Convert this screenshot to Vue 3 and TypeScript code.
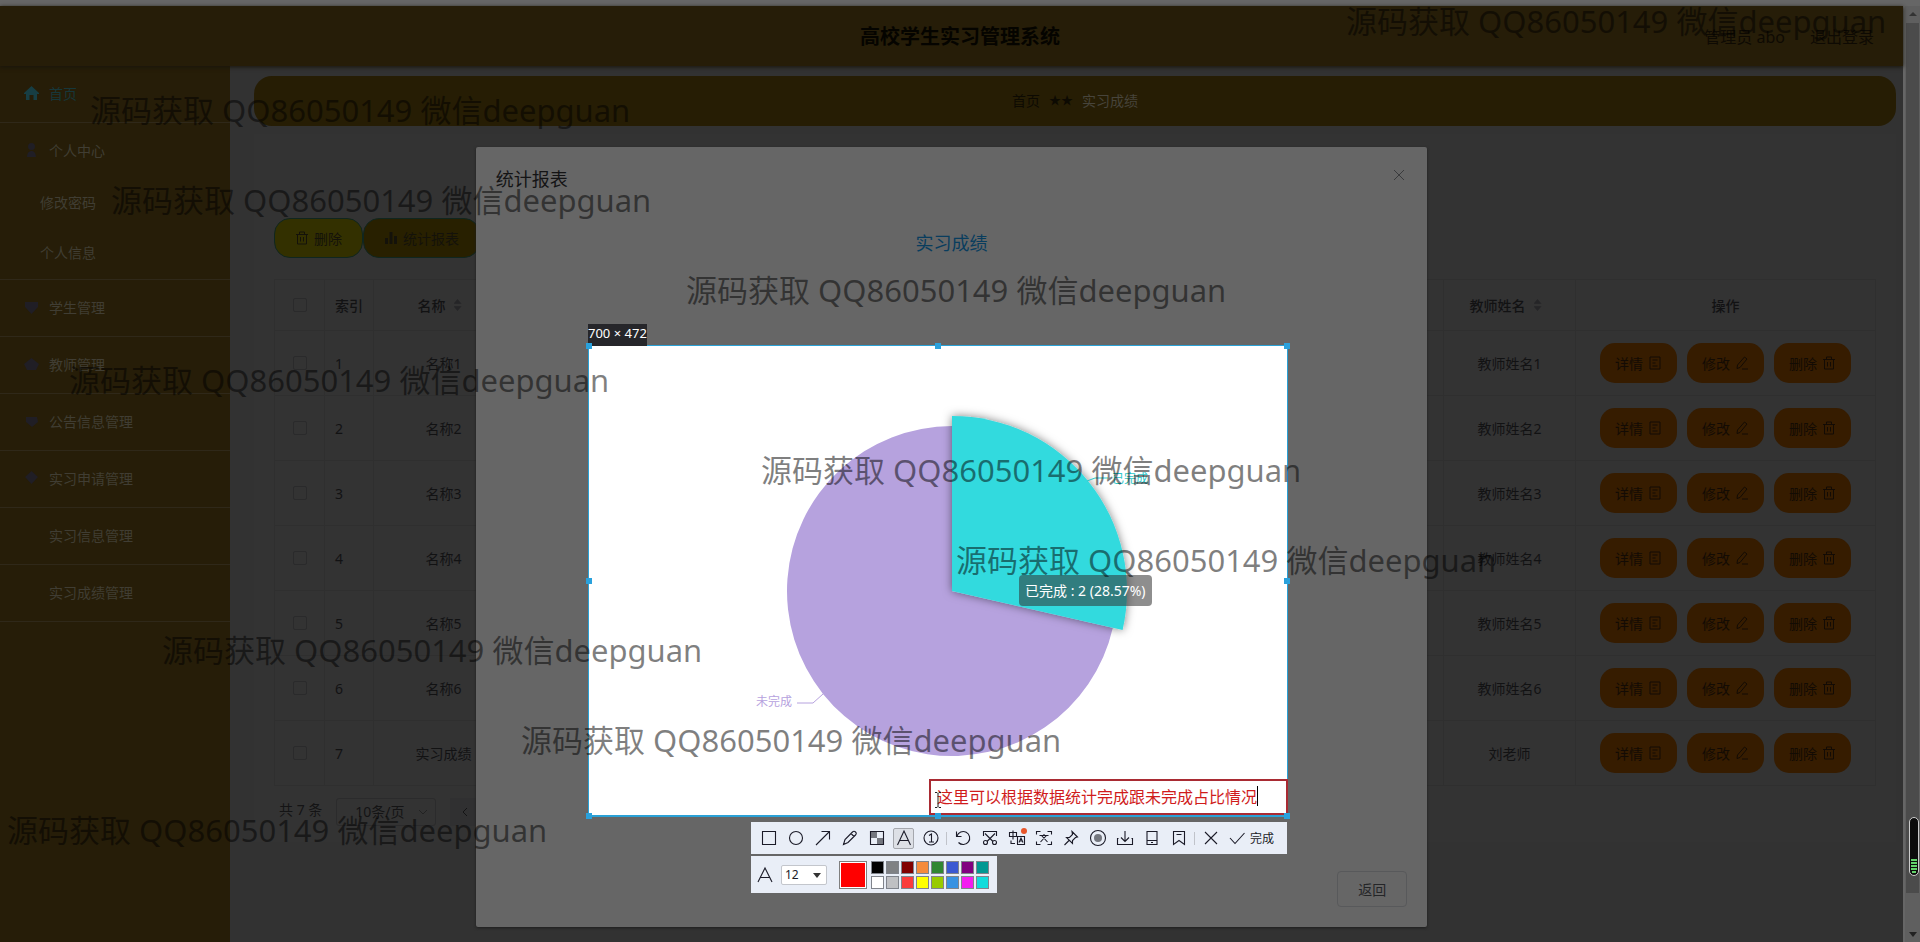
<script setup lang="ts">
interface MenuItem {
  label: string
  icon: string
  active?: boolean
  children?: string[]
}
interface Row {
  id: number
  name: string
  teacher: string
}
interface Mark {
  left: number
  top: number
}

const menu: MenuItem[] = [
  { label: '首页', icon: 'M0 7 7.500 0 15 7v1h-2v6H9.500V9h-4v5H2V8H0z', active: true },
  {
    label: '个人中心',
    icon: 'M7.500 0a3.500 3.500 0 0 1 0 7 3.500 3.500 0 0 1 0-7zM3 14c0-8 9-8 9 0z',
    children: ['修改密码', '个人信息'],
  },
  { label: '学生管理', icon: 'M1 2h13v5l-6.500 7L1 7z' },
  { label: '教师管理', icon: 'M0 7l7.500-6L15 7l-3 6H3z' },
  { label: '公告信息管理', icon: 'M2 3h11l1 5-6 5-6-5z' },
  { label: '实习申请管理', icon: 'M7.500 0 14 6l-6.500 7L1 6z' },
  { label: '实习信息管理', icon: '' },
  { label: '实习成绩管理', icon: '' },
]

const rows: Row[] = [
  { id: 1, name: '名称1', teacher: '教师姓名1' },
  { id: 2, name: '名称2', teacher: '教师姓名2' },
  { id: 3, name: '名称3', teacher: '教师姓名3' },
  { id: 4, name: '名称4', teacher: '教师姓名4' },
  { id: 5, name: '名称5', teacher: '教师姓名5' },
  { id: 6, name: '名称6', teacher: '教师姓名6' },
  { id: 7, name: '实习成绩', teacher: '刘老师' },
]

const iconTrash = 'M1 3.500h12M4.500 3V1h5v2M2.500 3.500v9.500h9V3.500M5.500 6v4.500M8.500 6v4.500'
const actions = [
  { label: '详情', icon: 'M2 1h10v12H2zM4.500 4h5M4.500 7h3M4.500 10h5' },
  { label: '修改', icon: 'M9.500 1 12 3 5 11.500l-3 1 .5-3.500zM7 13h6' },
  { label: '删除', icon: iconTrash },
]

const marks: Mark[] = [
  { left: 1346, top: 1 },
  { left: 90, top: 90 },
  { left: 111, top: 180 },
  { left: 686, top: 270 },
  { left: 69, top: 360 },
  { left: 761, top: 450 },
  { left: 956, top: 540 },
  { left: 162, top: 630 },
  { left: 521, top: 720 },
  { left: 7, top: 810 },
]

const handles = ['tl', 'tc', 'tr', 'ml', 'mr', 'bl', 'bc', 'br']

const swatches = [
  '#000000', '#7f8184', '#800000', '#f58b3c', '#308632', '#3a58d2', '#800080', '#009892',
  '#ffffff', '#bfc0c3', '#fa3c3c', '#ffff00', '#98cb00', '#3892e2', '#f41cf0', '#10dcdc',
]

// Pie geometry inside the 700 x 472 capture
const cx = 364
const cy = 246
const radius = 165
const total = 7
const done = 2
const angle = (done / total) * Math.PI * 2
function slice(from: number, to: number, r: number): string {
  const x1 = cx + r * Math.sin(from)
  const y1 = cy - r * Math.cos(from)
  const x2 = cx + r * Math.sin(to)
  const y2 = cy - r * Math.cos(to)
  const large = to - from > Math.PI ? 1 : 0
  return `M${cx} ${cy}L${x1} ${y1}A${r} ${r} 0 ${large} 1 ${x2} ${y2}Z`
}
const donePath = slice(0, angle, radius + 10)
const restPath = slice(angle, Math.PI * 2, radius)
</script>

<template>
  <div class="screen">
    <div class="browser">
      <div class="page">
        <header class="topbar">
          <h1>高校学生实习管理系统</h1>
          <div class="user">
            <span>管理员 abo</span>
            <a href="#">退出登录</a>
          </div>
        </header>
        <div class="body">
          <nav class="sidebar">
            <div v-for="item in menu" :key="item.label" class="group">
              <a href="#" class="item" :class="{ active: item.active }">
                <svg width="15" height="14" viewBox="0 0 15 14"><path :d="item.icon" fill="currentColor" /></svg>
                <span>{{ item.label }}</span>
              </a>
              <a v-for="child in item.children" :key="child" href="#" class="sub">{{ child }}</a>
            </div>
          </nav>
          <main class="content">
            <div class="crumbs">
              <a href="#">首页</a>
              <span class="stars">★★</span>
              <span class="here">实习成绩</span>
            </div>
            <section class="card">
              <div class="tools">
                <button type="button" class="tool del">
                  <svg width="14" height="14" viewBox="0 0 14 14"><path :d="iconTrash" class="line" /></svg>
                  删除
                </button>
                <button type="button" class="tool stat">
                  <svg width="14" height="14" viewBox="0 0 14 14"><path d="M1 7h3v6H1zM5.500 1h3v12h-3zM10 5h3v8h-3z" fill="currentColor" /></svg>
                  统计报表
                </button>
              </div>
              <table>
                <colgroup>
                  <col class="c-check" /><col class="c-index" /><col class="c-name" /><col />
                  <col class="c-teacher" /><col class="c-ops" />
                </colgroup>
                <thead>
                  <tr>
                    <th><input type="checkbox" aria-label="全选" /></th>
                    <th class="left">索引</th>
                    <th><span class="sortable">名称<i class="sort"></i></span></th>
                    <th></th>
                    <th><span class="sortable">教师姓名<i class="sort"></i></span></th>
                    <th>操作</th>
                  </tr>
                </thead>
                <tbody>
                  <tr v-for="row in rows" :key="row.id">
                    <td><input type="checkbox" :aria-label="row.name" /></td>
                    <td class="left">{{ row.id }}</td>
                    <td>{{ row.name }}</td>
                    <td></td>
                    <td>{{ row.teacher }}</td>
                    <td>
                      <div class="ops">
                        <button v-for="a in actions" :key="a.label" type="button" class="op">
                          {{ a.label }}
                          <svg width="14" height="14" viewBox="0 0 14 14"><path :d="a.icon" class="line" /></svg>
                        </button>
                      </div>
                    </td>
                  </tr>
                </tbody>
              </table>
              <div class="pager">
                <span>共 7 条</span>
                <span class="size">
                  <select aria-label="每页条数"><option>10条/页</option></select>
                  <svg width="10" height="6" viewBox="0 0 10 6"><path d="M1 1l4 4 4-4" class="line" /></svg>
                </span>
                <button type="button" aria-label="上一页">
                  <svg width="6" height="10" viewBox="0 0 6 10"><path d="M5 1L1 5l4 4" class="line" /></svg>
                </button>
              </div>
            </section>
          </main>
        </div>
        <div class="mask">
          <div class="dialog" role="dialog" aria-labelledby="dlg-title">
            <div class="dlg-head">
              <h2 id="dlg-title">统计报表</h2>
              <button type="button" class="close" aria-label="关闭">
                <svg width="12" height="12" viewBox="0 0 12 12"><path d="M1 1l10 10M11 1L1 11" class="line" /></svg>
              </button>
            </div>
            <p class="chart-title">实习成绩</p>
            <div class="dlg-foot"><button type="button">返回</button></div>
          </div>
        </div>
      </div>
      <div class="scrollbar">
        <i class="arrow up"></i>
        <i class="thumb"></i>
        <i class="arrow down"></i>
      </div>
    </div>

    <div class="gauge"><i v-for="n in 5" :key="n"></i></div>

    <div class="capture">
      <span class="dims">700 × 472</span>
      <svg class="pie" viewBox="0 0 700 472">
        <defs>
          <filter id="glow" x="-20%" y="-20%" width="140%" height="140%">
            <feDropShadow dx="0" dy="0" stdDeviation="5" flood-color="#000" flood-opacity="0.5" />
          </filter>
        </defs>
        <path :d="restPath" fill="#b6a2de" />
        <path :d="donePath" fill="#32dade" filter="url(#glow)" />
        <path d="M235 349L225 358H209" fill="none" stroke="#b6a2de" />
        <path d="M499 136L507 133H520" fill="none" stroke="#2ec7c9" />
        <text x="168" y="361" fill="#b6a2de">未完成</text>
        <text x="524" y="138" fill="#2ec7c9">已完成</text>
      </svg>
      <div class="tooltip">已完成 : 2 (28.57%)</div>
      <input class="note" type="text" value="这里可以根据数据统计完成跟未完成占比情况" aria-label="标注" />
      <i class="caret"></i>
      <svg class="ibeam" width="8" height="16" viewBox="0 0 8 16"><path d="M1 .5h2l1 1 1-1h2M4 1.500v13M1 15.500h2l1-1 1 1h2" fill="none" stroke="#222" /></svg>
      <i v-for="h in handles" :key="h" class="handle" :class="h"></i>

      <div class="panels">
        <div class="bar main">
          <button type="button" aria-label="矩形"><svg viewBox="0 0 20 20"><path d="M3.500 3.500h13v13h-13z" /></svg></button>
          <button type="button" aria-label="椭圆"><svg viewBox="0 0 20 20"><circle cx="10" cy="10" r="6.500" /></svg></button>
          <button type="button" aria-label="箭头"><svg viewBox="0 0 20 20"><path d="M3 17L16.500 3.500M8.500 3.500h8v8" /></svg></button>
          <button type="button" aria-label="画笔"><svg viewBox="0 0 20 20"><path d="M3.500 16.500l1.500-5L12.500 4q1.500-1.500 3 0t0 3L8 14.500zM11 5.500l3 3" /></svg></button>
          <button type="button" aria-label="马赛克"><svg viewBox="0 0 20 20"><path d="M4 4h6v6H4zM10 10h6v6h-6z" class="fill" /><path d="M3.500 3.500h13v13h-13z" /></svg></button>
          <button type="button" aria-label="文字" class="on"><svg viewBox="0 0 20 20"><path d="M3.500 17L10 3l6.500 14M6 12.500h8" /></svg></button>
          <button type="button" aria-label="序号"><svg viewBox="0 0 20 20"><circle cx="10" cy="10" r="7" /><path d="M8 7.500L10.500 6v8M8 14h5" /></svg></button>
          <i class="sep"></i>
          <button type="button" aria-label="撤销"><svg viewBox="0 0 20 20"><path d="M3.500 3.500v5h5M4 8a6.500 6.500 0 1 1 1.500 6.500" /></svg></button>
          <button type="button" aria-label="长截图"><svg viewBox="0 0 20 20"><path d="M3.500 8V3.500h13V8M5 5.500l8 8M15 5.500l-8 8" /><circle cx="5.500" cy="14.500" r="2" /><circle cx="14.500" cy="14.500" r="2" /></svg></button>
          <button type="button" aria-label="翻译"><svg viewBox="0 0 20 20"><path d="M2.500 4.500h7v4h-7zM6 2.500v9M10.500 8.500h7v8h-7zM12 14.500l2-4.500 2 4.500M13 13h2.500M4 12.500v3h4" /><circle cx="17" cy="3" r="3" class="dot" /></svg></button>
          <button type="button" aria-label="识别文字"><svg viewBox="0 0 20 20"><path d="M2.500 6.500v-3h4M13.500 3.500h4v3M2.500 13.500v3h4M13.500 16.500h4v-3M5.500 7.500h9M10 6v1.500M6.500 14l6-6.500M13.500 14l-6-6.500" /></svg></button>
          <button type="button" aria-label="钉住"><svg viewBox="0 0 20 20"><path d="M11 3.500L16.500 9l-2 .5-3 3v3l-6-6h3l3-3zM8 12.500L3.500 17" /></svg></button>
          <button type="button" aria-label="录屏"><svg viewBox="0 0 20 20"><circle cx="10" cy="10" r="7.500" /><circle cx="10" cy="10" r="4" class="fill" /></svg></button>
          <button type="button" aria-label="保存"><svg viewBox="0 0 20 20"><path d="M10 3v10.500M6 9.500l4 4 4-4M3.500 10.500h-1v6h15v-6h-1" /></svg></button>
          <button type="button" aria-label="发送到手机"><svg viewBox="0 0 20 20"><path d="M5 3.500h10v13H5zM5 12.500h10M9 14.500h2" /></svg></button>
          <button type="button" aria-label="收藏"><svg viewBox="0 0 20 20"><path d="M4.500 3.500h11v13L10 12.500l-5.500 4zM7.500 6.500h5" /></svg></button>
          <i class="sep"></i>
          <button type="button" aria-label="取消"><svg viewBox="0 0 20 20"><path d="M4 4l12 12M16 4L4 16" /></svg></button>
          <button type="button" class="finish"><svg viewBox="0 0 20 20"><path d="M3 10l5 5.500L17.500 5" /></svg>完成</button>
        </div>
        <div class="bar opts">
          <svg class="glyph" viewBox="0 0 20 20"><path d="M3 17L10 3l7 14M5.500 12.500h9" /></svg>
          <span class="font">
            <select aria-label="字号"><option>12</option></select>
            <i class="tri"></i>
          </span>
          <span class="current"></span>
          <div class="palette">
            <button v-for="c in swatches" :key="c" type="button" :aria-label="c" :style="{ backgroundColor: c }"></button>
          </div>
        </div>
      </div>
    </div>

    <div class="marks" aria-hidden="true">
      <span v-for="m in marks" :key="m.top" :style="{ left: m.left + 'px', top: m.top + 'px' }">源码获取 QQ86050149 微信deepguan</span>
    </div>
  </div>
</template>

<style>
body {
  margin: 0;
  background: #323232;
}
</style>

<style scoped>
* {
  box-sizing: border-box;
}
.screen {
  position: relative;
  min-height: 100vh;
  overflow: hidden;
  background: #323232;
  font-family: "Noto Sans", "Noto Sans CJK SC", sans-serif;
  font-size: 14px;
  color: #141415;
}
button,
select,
input {
  font: inherit;
  color: inherit;
  margin: 0;
}
a {
  color: inherit;
  text-decoration: none;
}
.line {
  fill: none;
  stroke: currentColor;
}
.browser {
  display: flex;
  min-height: 100vh;
  border-top: 6px solid #666;
  isolation: isolate;
}
.page {
  position: relative;
  flex: 1;
  display: flex;
  flex-direction: column;
}
.topbar {
  display: grid;
  grid-template-columns: 1fr auto 1fr;
  align-items: center;
  height: 60px;
  padding: 2px 29px 0 46px;
  background: #261d08;
  box-shadow: 0 1px 4px #18150c;
  z-index: 1;
}
.topbar h1 {
  grid-column: 2;
  margin: 0;
  font-size: 20px;
  line-height: 28px;
  color: #050400;
}
.user {
  display: flex;
  justify-content: flex-end;
  gap: 25px;
  font-size: 16px;
  line-height: 24px;
  color: #0e0a03;
}
.body {
  flex: 1;
  display: flex;
}
.sidebar {
  width: 230px;
  background: #261d08;
  color: #403d33;
}
.group {
  border-bottom: 1px solid #2f2819;
}
.item {
  display: flex;
  align-items: center;
  gap: 10px;
  height: 56px;
  padding: 0 0 2px 24px;
}
.item svg {
  color: #201e25;
}
.item.active {
  color: #17373a;
}
.item.active svg {
  color: #173e44;
}
.sub {
  display: flex;
  align-items: center;
  height: 50px;
  padding: 0 0 4px 40px;
}
.content {
  flex: 1;
  padding: 10px 7px 0 24px;
}
.crumbs {
  display: flex;
  justify-content: center;
  align-items: center;
  gap: 9px;
  height: 50px;
  padding-bottom: 2px;
  border-radius: 18px;
  background: #261d04;
  color: #0d0a02;
}
.stars {
  font-size: 12px;
}
.here {
  color: #47443b;
}
.card {
  margin-top: 8px;
  padding: 84px 20px 12px;
  background: #333;
}
.tools {
  display: flex;
}
.tool {
  display: flex;
  align-items: center;
  gap: 5px;
  height: 40px;
  padding: 0 20px;
  border: 1px solid #10261f;
  border-radius: 16px;
  color: #14120a;
}
.del {
  background: #333000;
}
.stat {
  background: #282000;
}
table {
  width: 100%;
  margin-top: 21px;
  table-layout: fixed;
  border-collapse: separate;
  border-spacing: 0;
  border-left: 1px solid #2f2f2f;
  border-top: 1px solid #2f2f2f;
}
.c-check { width: 50px; }
.c-index { width: 49px; }
.c-name { width: 140px; }
.c-teacher { width: 132px; }
.c-ops { width: 300px; }
th,
td {
  height: 65px;
  padding: 0 10px;
  border-right: 1px solid #2f2f2f;
  border-bottom: 1px solid #2f2f2f;
  text-align: center;
  font-weight: 400;
  color: #121213;
}
th {
  height: 51px;
  font-weight: 500;
}
.left {
  text-align: left;
}
input[type="checkbox"] {
  display: block;
  appearance: none;
  width: 14px;
  height: 14px;
  margin: 0 auto;
  border: 1px solid #2a2a2b;
  border-radius: 2px;
}
.sortable {
  display: inline-flex;
  align-items: center;
  gap: 8px;
  padding-right: 8px;
}
.sort {
  width: 8px;
  height: 12px;
  background: #252527;
  clip-path: polygon(50% 0, 100% 40%, 0 40%, 0 60%, 100% 60%, 50% 100%, 0 60%, 0 40%);
}
.ops {
  display: flex;
  justify-content: center;
  gap: 10px;
}
.op {
  display: flex;
  align-items: center;
  gap: 5px;
  height: 40px;
  padding: 0 15px;
  border: 0;
  border-radius: 15px;
  background: #361c00;
  color: #130b04;
}
.pager {
  display: flex;
  gap: 14px;
  height: 44px;
  padding: 12px 5px 0;
  line-height: 24px;
}
.size {
  position: relative;
}
.size select {
  appearance: none;
  width: 100px;
  height: 28px;
  padding: 0 18px;
  border: 1px solid #2b2b2c;
  border-radius: 3px;
  background: #333;
}
.size svg {
  position: absolute;
  right: 8px;
  top: 11px;
  color: #222;
}
.pager button {
  width: 30px;
  height: 28px;
  padding: 0;
  border: 0;
  background: #303031;
}
.mask {
  position: absolute;
  inset: 0;
  z-index: 2;
}
.dialog {
  display: flex;
  flex-direction: column;
  width: 50%;
  height: 780px;
  margin: 141px auto 0;
  border-radius: 2px;
  background: #666;
  box-shadow: 0 1px 3px #1e1e1e;
}
.dlg-head {
  display: flex;
  justify-content: space-between;
  align-items: center;
  padding: 20px 20px 10px;
}
.dlg-head h2 {
  margin: 0;
  font-size: 18px;
  line-height: 24px;
  font-weight: 400;
  color: #141415;
}
.close {
  display: flex;
  width: 16px;
  height: 16px;
  margin-bottom: 8px;
  padding: 2px;
  border: 0;
  background: none;
  color: #3a3b3d;
}
.chart-title {
  margin: 30px 0 0;
  text-align: center;
  font-size: 18px;
  line-height: 24px;
  color: #093d5e;
}
.dlg-foot {
  margin-top: auto;
  padding: 0 20px 20px;
  text-align: right;
}
.dlg-foot button {
  width: 70px;
  height: 36px;
  padding: 0;
  border: 1px solid #58595b;
  border-radius: 4px;
  background: #666;
  color: #242527;
}
.scrollbar {
  display: flex;
  flex-direction: column;
  align-items: center;
  width: 17px;
  padding: 6px 0 5px;
  border-left: 2px solid #666;
  background: #5f5f5f;
}
.arrow {
  border: 4px solid transparent;
}
.up {
  border-top: 0;
  border-bottom: 4px solid #333;
}
.down {
  border-bottom: 0;
  border-top: 5px solid #222;
}
.thumb {
  width: 13px;
  height: 870px;
  margin: 7px 0 auto;
  background: #4b4b4b;
}
.gauge {
  position: absolute;
  right: 1px;
  top: 817px;
  display: flex;
  flex-direction: column;
  justify-content: flex-end;
  gap: 1px;
  width: 10px;
  height: 59px;
  padding: 2px 1px;
  border: 1px solid #ccc;
  border-radius: 5px;
  background: #0c0c0c;
}
.gauge i {
  height: 2px;
  background: #62d26a;
}
.gauge i:last-child {
  margin: 0 1px;
}
.capture {
  position: absolute;
  left: 588px;
  top: 345px;
  width: 700px;
  height: 472px;
  border: 1px solid #2aa1d6;
  border-bottom-width: 2px;
  background: #fff;
}
.dims {
  position: absolute;
  left: -1px;
  bottom: 100%;
  height: 22px;
  font-size: 13px;
  line-height: 18px;
  white-space: nowrap;
  background: #26262a;
  color: #fff;
}
.pie {
  position: absolute;
  left: -1px;
  top: -1px;
  width: 700px;
  height: 472px;
  font-size: 12px;
}
.tooltip {
  position: absolute;
  left: 430px;
  top: 229px;
  padding: 5px 6px;
  border-radius: 4px;
  background: rgba(50, 50, 50, 0.55);
  color: #fff;
  font-size: 14px;
  line-height: 21px;
  white-space: nowrap;
}
.note {
  position: absolute;
  right: -1px;
  bottom: 0;
  width: 359px;
  height: 36px;
  padding: 0 6px 2px;
  border: 2px solid #a92b33;
  border-radius: 0;
  background: #fff;
  color: #d01c1c;
  font-size: 16px;
}
.caret {
  position: absolute;
  left: 668px;
  top: 440px;
  width: 1px;
  height: 20px;
  background: #000;
}
.ibeam {
  position: absolute;
  left: 345px;
  top: 446px;
}
.handle {
  position: absolute;
  width: 6px;
  height: 6px;
  background: #2aa1dc;
}
.tl, .tc, .tr { top: -3px; }
.ml, .mr { top: 232px; }
.bl, .bc, .br { bottom: -4px; }
.tl, .ml, .bl { left: -3px; }
.tr, .mr, .br { right: -3px; }
.tc, .bc { left: 346px; }
.panels {
  position: absolute;
  right: 0;
  top: 476px;
  width: 536px;
  display: flex;
  flex-direction: column;
  align-items: flex-start;
  gap: 2px;
}
.bar {
  display: flex;
  align-items: center;
  background: #e9eef7;
  color: #1b1b28;
}
.main {
  width: 100%;
  height: 32px;
  padding: 0 4px;
}
.bar svg {
  width: 20px;
  height: 20px;
  fill: none;
  stroke: currentColor;
  stroke-width: 1.1;
}
.bar .fill {
  fill: #74777f;
  stroke: none;
}
.bar .dot {
  fill: #e8562a;
  stroke: none;
}
.main button {
  display: flex;
  align-items: center;
  justify-content: center;
  flex: none;
  width: 21px;
  height: 21px;
  margin: 0 3px;
  padding: 0;
  border: 0;
  border-radius: 2px;
  background: none;
}
.main .on {
  border: 1px solid #a5a8ae;
  background: #dde0e6;
}
.main .on svg {
  flex: none;
}
.main .finish {
  width: auto;
  gap: 3px;
  font-size: 12px;
}
.sep {
  width: 1px;
  height: 13px;
  margin: 0 2px;
  background: #c0c3ca;
}
.opts {
  height: 37px;
  padding: 0 8px 0 4px;
}
.font {
  position: relative;
  margin: 0 12px 0 6px;
}
.font select {
  display: block;
  appearance: none;
  width: 46px;
  height: 20px;
  padding: 0 3px;
  border: 1px solid #c3c6cc;
  border-radius: 2px;
  background: #fff;
  font-size: 12px;
  line-height: 18px;
}
.tri {
  position: absolute;
  right: 6px;
  top: 8px;
  border: 4px solid transparent;
  border-top: 5px solid #333;
  border-bottom: 0;
}
.current {
  width: 28px;
  height: 28px;
  margin-right: 4px;
  border: 1px solid #808080;
  background: #f00;
  box-shadow: inset 0 0 0 1px #fff;
}
.palette {
  display: grid;
  grid-template-columns: repeat(8, 13px);
  gap: 2px;
}
.palette button {
  height: 13px;
  padding: 0;
  border: 1px solid #80848c;
}
.marks span {
  position: absolute;
  z-index: 3;
  font-size: 31px;
  line-height: 40px;
  white-space: nowrap;
  color: rgba(0, 0, 0, 0.5);
  pointer-events: none;
}
</style>
